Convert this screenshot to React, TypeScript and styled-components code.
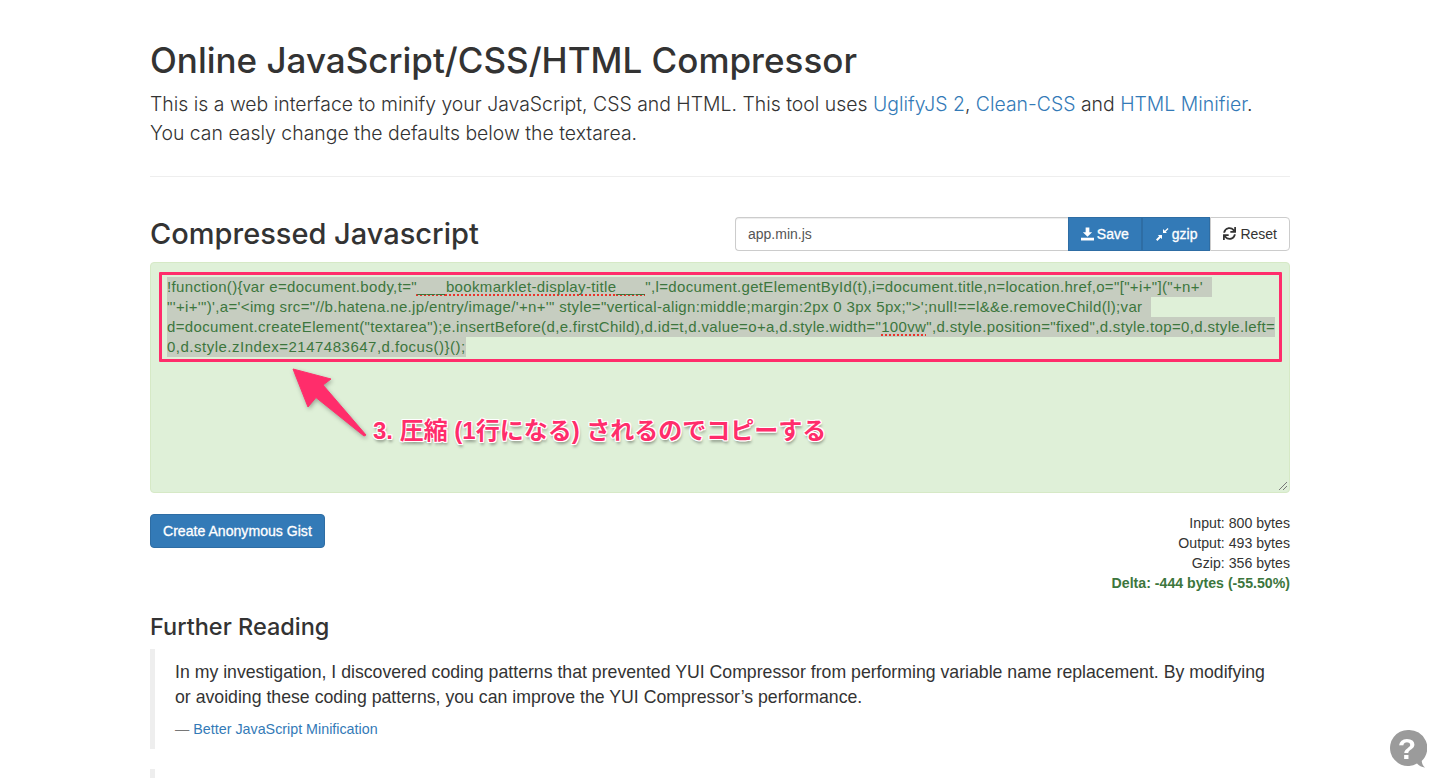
import React from "react";
import styled, { createGlobalStyle } from "styled-components";
import { FaSync } from "react-icons/fa";

const GlobalStyle = createGlobalStyle`
  html, body {
    margin: 0;
    height: 778px;
    overflow: hidden;
    background: #fff;
  }
  body {
    font-family: "Liberation Sans", Arial, sans-serif;
    font-size: 14px;
    line-height: 20px;
    color: #333;
  }
  * { box-sizing: border-box; }
`;

const Container = styled.div`
  width: 1170px;
  margin: 0 auto;
  padding: 0 15px;
`;

const Title = styled.h1`
  margin: 40px 0 10px;
  font-family: Inter, "Liberation Sans", sans-serif;
  font-size: 35px;
  line-height: 40px;
  font-weight: 500;
  white-space: nowrap;
`;

const Lead = styled.p`
  margin: 0 0 20px;
  font-family: Inter, "Liberation Sans", sans-serif;
  font-size: 19.42px;
  line-height: 29.4px;
  font-weight: 300;
  white-space: nowrap;
`;

const Link = styled.a`
  color: #337ab7;
  text-decoration: none;
`;

const Rule = styled.hr`
  margin: 27px 0 0;
  border: 0;
  border-top: 1px solid #eee;
`;

const OutputHeader = styled.div`
  display: flex;
  align-items: center;
  justify-content: space-between;
  margin-top: 40px;
  height: 34px;
`;

const SectionTitle = styled.h2`
  margin: 0;
  font-family: Inter, "Liberation Sans", sans-serif;
  font-size: 29px;
  line-height: 33px;
  font-weight: 500;
`;

const InputGroup = styled.div`
  display: flex;
  width: 555px;
  height: 34px;
`;

const FileInput = styled.div`
  flex: 1;
  padding: 6px 12px;
  border: 1px solid #ccc;
  border-right: 0;
  border-radius: 4px 0 0 4px;
  color: #555;
  box-shadow: inset 0 1px 1px rgba(0, 0, 0, 0.075);
`;

const GroupButton = styled.button<{ $primary?: boolean }>`
  display: flex;
  align-items: center;
  gap: ${(p) => (p.$primary ? "3px" : "4px")};
  height: 34px;
  padding: 0 12px;
  font: inherit;
  color: ${(p) => (p.$primary ? "#fff" : "#333")};
  background: ${(p) => (p.$primary ? "#337ab7" : "#fff")};
  border: 1px solid ${(p) => (p.$primary ? "#2e6da4" : "#ccc")};
  border-radius: ${(p) => (p.$primary ? "0" : "0 4px 4px 0")};
  -webkit-text-stroke: ${(p) => (p.$primary ? "0.3px #fff" : "0")};
`;

const Output = styled.div`
  position: relative;
  height: 231px;
  margin-top: 11px;
  padding: 14px 16px;
  background: #dff0d8;
  border: 1px solid #d6e9c6;
  border-radius: 4px;
  color: #3c763d;
  font-size: 15px;
  letter-spacing: 0.35px;
`;

const CodeLine = styled.div<{ $spread?: boolean }>`
  width: fit-content;
  height: 20px;
  background: #c6cdc0;
  white-space: pre;
  letter-spacing: ${(p) => (p.$spread ? "0.5px" : "inherit")};
`;

const Misspelt = styled.span`
  text-decoration: underline dotted #e8352b;
  text-decoration-thickness: 1.5px;
  text-decoration-skip-ink: none;
  text-underline-offset: 3px;
`;

const Blank = styled.span`
  letter-spacing: 1.3px;
`;

const Highlight = styled.div`
  position: absolute;
  left: 8px;
  top: 9px;
  width: 1123px;
  height: 90px;
  border: 3px solid #ff2d6b;
  border-radius: 1px;
`;

const Arrow = styled.svg`
  position: absolute;
  left: 130px;
  top: 94px;
  filter: drop-shadow(1px 2px 2px rgba(0, 0, 0, 0.3));
`;

const Note = styled.div`
  position: absolute;
  left: 222px;
  top: 152px;
  font-family: "Liberation Sans", "Noto Sans CJK JP", sans-serif;
  font-size: 24px;
  line-height: 32px;
  font-weight: 700;
  letter-spacing: 0;
  white-space: nowrap;
  color: #ff2d6b;
  text-shadow: 1px 0 0 #fff, -1px 0 0 #fff, 0 1px 0 #fff, 0 -1px 0 #fff,
    1px 1px 0 #fff, -1px 1px 0 #fff, 1px -1px 0 #fff, -1px -1px 0 #fff,
    1px 3px 3px rgba(0, 0, 0, 0.35);
`;

const Grip = styled.svg`
  position: absolute;
  right: 1px;
  bottom: 1px;
`;

const OutputFooter = styled.div`
  display: flex;
  justify-content: space-between;
  align-items: flex-start;
  margin-top: 20px;
`;

const GistButton = styled.button`
  height: 34px;
  margin-top: 1px;
  padding: 0 12px;
  font: inherit;
  font-size: 14.1px;
  color: #fff;
  background: #337ab7;
  border: 1px solid #2e6da4;
  border-radius: 4px;
  -webkit-text-stroke: 0.3px #fff;
`;

const Stats = styled.div`
  font-size: 14.15px;
  text-align: right;
`;

const Delta = styled.div`
  font-weight: 700;
  color: #3c763d;
`;

const SubTitle = styled.h3`
  margin: 21px 0 9px;
  font-family: Inter, "Liberation Sans", sans-serif;
  font-size: 23.5px;
  line-height: 26px;
  font-weight: 500;
`;

const Quote = styled.blockquote`
  margin: 0 0 20px;
  padding: 11px 20px 10px;
  border-left: 5px solid #eee;
  font-size: 17.7px;
  line-height: 25px;
`;

const QuoteSource = styled.footer`
  margin-top: 9px;
  font-size: 14.3px;
  line-height: 20px;
  color: #777;
`;

const HelpBubble = styled.svg`
  position: fixed;
  right: 13px;
  bottom: 9px;
`;

const SaveIcon = () => (
  <svg width="13" height="14" viewBox="0 0 14 14" fill="currentColor">
    <path d="M5 0h4v5h3L7 10 2 5h3z" />
    <path d="M0 11h14v3H0z" />
  </svg>
);

const CompressIcon = () => (
  <svg width="14" height="14" viewBox="0 0 14 14" fill="currentColor">
    <path d="M1 12.5 4.2 9.3 2.8 7.9H7v4.2L5.6 10.7 2.4 13.9z" />
    <path d="M8 2v4h4l-1.3-1.3L13.5 1.9 12.6 1 9.8 3.8z" />
  </svg>
);

export default function App() {
  return (
    <>
      <GlobalStyle />
      <Container>
        <Title>Online JavaScript/CSS/HTML Compressor</Title>
        <Lead>
          This is a web interface to minify your JavaScript, CSS and HTML. This tool uses{" "}
          <Link href="#">UglifyJS 2</Link>, <Link href="#">Clean-CSS</Link> and{" "}
          <Link href="#">HTML Minifier</Link>.
          <br />
          You can easly change the defaults below the textarea.
        </Lead>
        <Rule />
        <OutputHeader>
          <SectionTitle>Compressed Javascript</SectionTitle>
          <InputGroup>
            <FileInput>app.min.js</FileInput>
            <GroupButton $primary>
              <SaveIcon /> Save
            </GroupButton>
            <GroupButton $primary>
              <CompressIcon /> gzip
            </GroupButton>
            <GroupButton>
              <FaSync size={13} /> Reset
            </GroupButton>
          </InputGroup>
        </OutputHeader>
        <Output>
          <CodeLine>
            {'!function(){var e=document.body,t="'}
            <Misspelt>
              <Blank>___</Blank>bookmarklet-display-title<Blank>___</Blank>
            </Misspelt>
            {'",l=document.getElementById(t),i=document.title,n=location.href,o="["+i+"]("+n+\'  '}
          </CodeLine>
          <CodeLine>
            {'"\'+i+\'")\',a=\'<img src="//b.hatena.ne.jp/entry/image/\'+n+\'" style="vertical-align:middle;margin:2px 0 3px 5px;">\';null!==l&&e.removeChild(l);var  '}
          </CodeLine>
          <CodeLine>
            {'d=document.createElement("textarea");e.insertBefore(d,e.firstChild),d.id=t,d.value=o+a,d.style.width="'}
            <Misspelt>100vw</Misspelt>
            {'",d.style.position="fixed",d.style.top=0,d.style.left='}
          </CodeLine>
          <CodeLine $spread>{"0,d.style.zIndex=2147483647,d.focus()}();"}</CodeLine>
          <Highlight />
          <Arrow width="90" height="84" viewBox="0 0 90 84">
            <path d="M12 12 50 22 42 28 85 78 83 79 35 40.500 27 50z" fill="#ff2d6b" stroke="#ff2d6b" strokeLinejoin="round" />
          </Arrow>
          <Note>3. 圧縮 (1行になる) されるのでコピーする</Note>
          <Grip width="10" height="10" viewBox="0 0 10 10" stroke="#777" strokeWidth="1">
            <path d="M1 9 9 1M5 9 9 5" />
          </Grip>
        </Output>
        <OutputFooter>
          <GistButton>Create Anonymous Gist</GistButton>
          <Stats>
            <div>Input: 800 bytes</div>
            <div>Output: 493 bytes</div>
            <div>Gzip: 356 bytes</div>
            <Delta>Delta: -444 bytes (-55.50%)</Delta>
          </Stats>
        </OutputFooter>
        <SubTitle>Further Reading</SubTitle>
        <Quote>
          In my investigation, I discovered coding patterns that prevented YUI Compressor from performing variable name replacement. By modifying
          <br />
          or avoiding these coding patterns, you can improve the YUI Compressor’s performance.
          <QuoteSource>
            — <Link href="#">Better JavaScript Minification</Link>
          </QuoteSource>
        </Quote>
        <Quote />
      </Container>
      <HelpBubble width="38" height="40" viewBox="0 0 38 40">
        <path d="M19 1a18 18 0 1 0 9 33.6c2 2.4 5 4 8 3.9-2-1.6-3-3.8-3.3-6.5A18 18 0 0 0 19 1z" fill="#9b9b9b" />
        <text x="18" y="30" textAnchor="middle" fontFamily="Liberation Sans" fontWeight="700" fontSize="30" fill="#fff">?</text>
      </HelpBubble>
    </>
  );
}
